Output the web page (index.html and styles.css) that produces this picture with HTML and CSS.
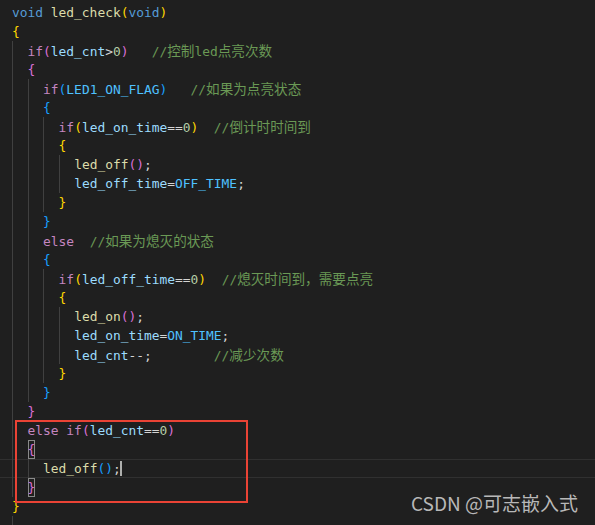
FILE: index.html
```html
<!DOCTYPE html>
<html lang="zh-CN">
<head>
    <meta charset="UTF-8">
    <meta name="viewport" content="width=device-width, initial-scale=1.0">
    <title>led_check</title>
    <link rel="stylesheet" href="styles.css">
</head>
<body>
    <div class="editor">
        <div class="ln"><span class="k">void</span> <span class="f">led_check</span><span class="b1">(</span><span class="k">void</span><span class="b1">)</span></div>
        <div class="ln"><span class="b1">{</span></div>
        <div class="ln"><span class="ind">  </span><span class="c">if</span><span class="b2">(</span><span class="v">led_cnt</span>&gt;<span class="n">0</span><span class="b2">)</span>   <span class="cm">//<span class="zh">控制</span>led<span class="zh">点亮次数</span></span></div>
        <div class="ln"><span class="ind">  </span><span class="b2">{</span></div>
        <div class="ln"><span class="ind">  </span><span class="ind">  </span><span class="c">if</span><span class="b3">(</span><span class="m">LED1_ON_FLAG</span><span class="b3">)</span>   <span class="cm">//<span class="zh">如果为点亮状态</span></span></div>
        <div class="ln"><span class="ind">  </span><span class="ind">  </span><span class="b3">{</span></div>
        <div class="ln"><span class="ind">  </span><span class="ind">  </span><span class="ind">  </span><span class="c">if</span><span class="b1">(</span><span class="v">led_on_time</span>==<span class="n">0</span><span class="b1">)</span>  <span class="cm">//<span class="zh">倒计时时间到</span></span></div>
        <div class="ln"><span class="ind">  </span><span class="ind">  </span><span class="ind">  </span><span class="b1">{</span></div>
        <div class="ln"><span class="ind">  </span><span class="ind">  </span><span class="ind">  </span><span class="ind">  </span><span class="f">led_off</span><span class="b2">()</span>;</div>
        <div class="ln"><span class="ind">  </span><span class="ind">  </span><span class="ind">  </span><span class="ind">  </span><span class="v">led_off_time</span>=<span class="m">OFF_TIME</span>;</div>
        <div class="ln"><span class="ind">  </span><span class="ind">  </span><span class="ind">  </span><span class="b1">}</span></div>
        <div class="ln"><span class="ind">  </span><span class="ind">  </span><span class="b3">}</span></div>
        <div class="ln"><span class="ind">  </span><span class="ind">  </span><span class="c">else</span>  <span class="cm">//<span class="zh">如果为熄灭的状态</span></span></div>
        <div class="ln"><span class="ind">  </span><span class="ind">  </span><span class="b3">{</span></div>
        <div class="ln"><span class="ind">  </span><span class="ind">  </span><span class="ind">  </span><span class="c">if</span><span class="b1">(</span><span class="v">led_off_time</span>==<span class="n">0</span><span class="b1">)</span>  <span class="cm">//<span class="zh">熄灭时间到，需要点亮</span></span></div>
        <div class="ln"><span class="ind">  </span><span class="ind">  </span><span class="ind">  </span><span class="b1">{</span></div>
        <div class="ln"><span class="ind">  </span><span class="ind">  </span><span class="ind">  </span><span class="ind">  </span><span class="f">led_on</span><span class="b2">()</span>;</div>
        <div class="ln"><span class="ind">  </span><span class="ind">  </span><span class="ind">  </span><span class="ind">  </span><span class="v">led_on_time</span>=<span class="m">ON_TIME</span>;</div>
        <div class="ln"><span class="ind">  </span><span class="ind">  </span><span class="ind">  </span><span class="ind">  </span><span class="v">led_cnt</span>--;        <span class="cm">//<span class="zh">减少次数</span></span></div>
        <div class="ln"><span class="ind">  </span><span class="ind">  </span><span class="ind">  </span><span class="b1">}</span></div>
        <div class="ln"><span class="ind">  </span><span class="ind">  </span><span class="b3">}</span></div>
        <div class="ln"><span class="ind">  </span><span class="b2">}</span></div>
        <div class="ln"><span class="ind">  </span><span class="c">else</span> <span class="c">if</span><span class="b2">(</span><span class="v">led_cnt</span>==<span class="n">0</span><span class="b2">)</span></div>
        <div class="ln"><span class="ind">  </span><span class="b2 match">{</span></div>
        <div class="ln cur"><span class="ind">  </span><span class="ind">  </span><span class="f">led_off</span><span class="b3">()</span>;<span class="caret"></span></div>
        <div class="ln"><span class="ind">  </span><span class="b2 match">}</span></div>
        <div class="ln"><span class="b1">}</span></div>
        <div class="ln"><span class="ind">  </span></div>
    </div>

    <!-- annotation drawn over the editor -->
    <div class="mark-box"></div>
    <div class="watermark">CSDN @可志嵌入式</div>
</body>
</html>
```

FILE: styles.css
```css
:root {
    --bg: #1f1f1f;
    --text: #d4d4d4;
    --keyword: #569cd6;
    --control: #c586c0;
    --func: #dcdcaa;
    --var: #9cdcfe;
    --num: #b5cea8;
    --const: #4fc1ff;
    --comment: #6a9955;
    --bracket1: #ffd700;
    --bracket2: #da70d6;
    --bracket3: #179fff;
    --guide: #404040;
}

body {
    margin: 0;
    padding: 0;
    background: var(--bg);
    overflow: hidden;
    height: 525px;
    position: relative;
}

.editor {
    padding-top: 3px;
    font-family: "DejaVu Sans Mono", "Noto Sans CJK SC", monospace;
    font-size: 12.9px;
    color: var(--text);
}

.ln {
    height: 19px;
    line-height: 19px;
    padding-left: 12px;
    white-space: pre;
    overflow: visible;
}

.ln.cur {
    box-shadow: inset 0 1px 0 #303030, inset 0 -1px 0 #303030;
}

.ind {
    display: inline-block;
    height: 19px;
    vertical-align: top;
    box-shadow: inset 1px 0 0 var(--guide);
}

.k { color: var(--keyword); }
.c { color: var(--control); }
.f { color: var(--func); }
.v { color: var(--var); }
.n { color: var(--num); }
.m { color: var(--const); }
.cm { color: var(--comment); }
.b1 { color: var(--bracket1); }
.b2 { color: var(--bracket2); }
.b3 { color: var(--bracket3); }

.zh {
    font-family: "Noto Sans CJK SC", sans-serif;
    font-size: 13.6px;
}

.match {
    display: inline-block;
    height: 19px;
    vertical-align: top;
    box-shadow: inset 0 0 0 1px #8a8a8a;
}

.caret {
    display: inline-block;
    width: 2px;
    height: 15px;
    margin-left: -1px;
    vertical-align: -3px;
    background: #aeafad;
}

.mark-box {
    position: absolute;
    left: 15px;
    top: 420px;
    width: 233px;
    height: 83px;
    box-sizing: border-box;
    border: 2px solid #ea4335;
}

.watermark {
    position: absolute;
    right: 17px;
    top: 491px;
    font-family: "Noto Sans CJK SC", sans-serif;
    font-size: 19px;
    line-height: 24px;
    color: #b8b8b8;
}
```
